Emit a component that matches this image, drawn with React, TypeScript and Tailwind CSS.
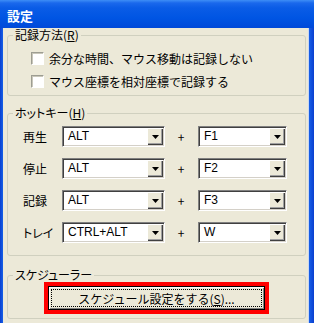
import React from "react";

const jp = "font-['Noto_Sans_CJK_JP',sans-serif]";

function Checkbox({ label }: { label: string }) {
  return (
    <div className="flex h-[15px] items-center">
      <span className="h-[13px] w-[13px] shrink-0 border border-t-[#9d9d92] border-l-[#9d9d92] border-b-white border-r-white bg-white shadow-[inset_1px_1px_0_#c9c7ba]" />
      <span className="ml-[5px] text-[12px] leading-[15px] text-black">{label}</span>
    </div>
  );
}

function Combo({ value, w }: { value: string; w: string }) {
  return (
    <div
      className={`flex h-[21px] ${w} border border-t-[#808080] border-l-[#808080] border-b-white border-r-white bg-white shadow-[inset_1px_1px_0_#404040,inset_-1px_-1px_0_#d4d0c8]`}
    >
      <span className="flex-1 self-center pl-[5px] font-['Liberation_Sans',sans-serif] text-[12px] leading-[15px] text-black">
        {value}
      </span>
      <div className="my-[1px] mr-[1px] flex w-[16px] items-center justify-center bg-[#ece9d8] shadow-[inset_1px_1px_0_#fff,inset_-1px_-1px_0_#404040,inset_-2px_-2px_0_#a0a0a0]">
        <svg width="7" height="4" viewBox="0 0 7 4">
          <polygon points="0,0 7,0 3.5,4" fill="#000" />
        </svg>
      </div>
    </div>
  );
}

function Row({ label, mod, key2 }: { label: string; mod: string; key2: string }) {
  return (
    <div className="flex h-[21px] items-center">
      <span className="w-[39px] text-[12px] leading-[15px] text-black [font-feature-settings:'palt']">
        {label}
      </span>
      <Combo value={mod} w="w-[103px]" />
      <span className="w-[32px] text-center text-[12px] leading-[15px] text-black">+</span>
      <div className="ml-[1px]">
        <Combo value={key2} w="w-[89px]" />
      </div>
    </div>
  );
}

export default function App() {
  return (
    <div className={`flex h-[323px] w-[314px] flex-col overflow-hidden bg-[#0a48d8] ${jp}`}>
      {/* タイトルバー */}
      <div className="flex h-[28px] shrink-0 items-center bg-[linear-gradient(to_bottom,#3d8ef6_0px,#1a68ec_3px,#0a5ce6_8px,#0055e3_18px,#0049d9_28px)] pl-[7px] pt-[3px]">
        <span className="block text-[13px] font-bold leading-[16px] text-white">設定</span>
      </div>

      <div className="flex flex-1">
        <div className="w-[3px] bg-[linear-gradient(to_right,#0a3fcf,#1660e8)]" />

        <div className="flex-1 bg-[#ece9d8] pl-[4px] pr-[2px]">
          {/* 記録方法 */}
          <fieldset className="rounded-[3px] border border-[#d0d0bf]">
            <legend className="ml-[5px] px-[2px] text-[12px] leading-[14px] text-black">
              記録方法(<span className="underline">R</span>)
            </legend>
            <div className="flex flex-col gap-[8px] pb-[6px] pl-[23px] pt-[9px]">
              <Checkbox label="余分な時間、マウス移動は記録しない" />
              <Checkbox label="マウス座標を相対座標で記録する" />
            </div>
          </fieldset>

          {/* ホットキー */}
          <fieldset className="mt-[10px] rounded-[3px] border border-[#d0d0bf]">
            <legend className="ml-[5px] px-[2px] text-[12px] leading-[14px] text-black [font-feature-settings:'palt']">
              ホットキー(<span className="underline">H</span>)
            </legend>
            <div className="flex flex-col gap-[11px] pb-[12px] pl-[15px] pt-[6px]">
              <Row label="再生" mod="ALT" key2="F1" />
              <Row label="停止" mod="ALT" key2="F2" />
              <Row label="記録" mod="ALT" key2="F3" />
              <Row label="トレイ" mod="CTRL+ALT" key2="W" />
            </div>
          </fieldset>

          {/* スケジューラー */}
          <fieldset className="mt-[12px] rounded-[3px] border border-[#d0d0bf]">
            <legend className="ml-[5px] px-[2px] text-[12px] leading-[14px] text-black [font-feature-settings:'palt']">
              スケジューラー
            </legend>
            <div className="pb-[4px] pl-[36px]">
              <div className="w-[225px] border-[4px] border-[#ff0000]">
                <button className="flex h-[24px] w-full border border-black bg-[#ece9d8] p-[2px] shadow-[inset_1px_1px_0_#fff,inset_-1px_-1px_0_#808080]">
                  <span className="flex flex-1 items-center justify-center border border-dotted border-black text-[12px] leading-[15px] text-black">
                    スケジュール設定をする(<span className="underline">S</span>)...
                  </span>
                </button>
              </div>
            </div>
          </fieldset>
        </div>

        <div className="w-[6px] bg-[linear-gradient(to_right,#c9d6f2_0px,#c9d6f2_1px,#1660e8_1px,#0a3fcf_6px)]" />
      </div>
    </div>
  );
}
